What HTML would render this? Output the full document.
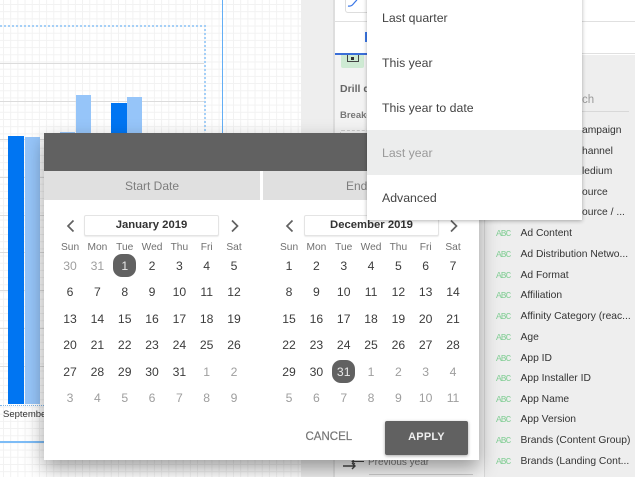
<!DOCTYPE html>
<html><head><meta charset="utf-8">
<style>
html,body{margin:0;padding:0;width:635px;height:477px;overflow:hidden;background:#fff;font-family:"Liberation Sans",sans-serif}
#r{position:relative;width:635px;height:477px;overflow:hidden;filter:blur(.25px)}
.a{position:absolute}
.t{position:absolute;white-space:nowrap}
.cal{position:absolute;top:234.75px;width:191.4px;display:grid;grid-template-columns:repeat(7,27.34px);grid-template-rows:18px;grid-auto-rows:26.5px;text-align:center;font-size:12.2px;line-height:26.5px;color:#3c3c3c}
.cal b{font-weight:normal;font-size:10.2px;color:#707070;height:18px;line-height:26px}
.cal i{font-style:normal;position:relative;z-index:1}
.cal i.o{color:#9e9e9e}
.cal i.s{color:#e8e8e8}
.cal i.s:before{content:"";position:absolute;left:2px;top:1px;width:23px;height:23px;border-radius:9px;background:#616161;z-index:-1}
.box{position:absolute;top:215px;height:19px;background:#fff;border:1px solid #e4e4e4;border-radius:2px;box-shadow:0 1px 1px rgba(0,0,0,.08);text-align:center;font-size:11.3px;font-weight:bold;line-height:19px;color:#333}
.li{position:absolute;left:367px;width:215px;height:45px;line-height:46px;font-size:12.3px;color:#444;text-indent:15px}
.f{position:absolute;left:520.5px;font-size:10.3px;color:#333;white-space:nowrap;line-height:14px}
.g{position:absolute;left:496px;font-size:9.5px;color:#86cf98;font-family:"Liberation Mono",monospace;line-height:14px;letter-spacing:-.9px}
</style></head><body><div id="r">

<!-- canvas grid -->
<div class="a" style="left:0;top:0;width:301px;height:477px;background-color:#fff;background-image:linear-gradient(#f2f2f2 1px,transparent 1px),linear-gradient(90deg,#f2f2f2 1px,transparent 1px);background-size:7.2px 7.2px;background-position:3px 4px"></div>
<div class="a" style="left:301px;top:0;width:32px;height:477px;background:#eeeeee"></div>
<div class="a" style="left:333px;top:0;width:3px;height:477px;background:#dedede"></div>

<!-- chart -->
<div class="a" style="left:222px;top:0;width:1px;height:135px;background:#63aef5"></div>
<div class="a" style="left:0;top:25px;width:206px;height:0;border-top:2px dotted #a6d0f7"></div>
<div class="a" style="left:204px;top:25px;width:0;height:110px;border-left:2px dotted #a6d0f7"></div>
<div class="a" style="left:0;top:63px;width:204px;height:1px;background:#dcdcdc"></div>
<div class="a" style="left:0;top:101px;width:204px;height:1px;background:#dcdcdc"></div>
<div class="a" style="left:0;top:139px;width:44px;height:1px;background:#dcdcdc"></div>
<div class="a" style="left:0;top:177px;width:44px;height:1px;background:#dcdcdc"></div>
<div class="a" style="left:0;top:215px;width:44px;height:1px;background:#dcdcdc"></div>
<div class="a" style="left:0;top:252px;width:44px;height:1px;background:#dcdcdc"></div>
<div class="a" style="left:0;top:290px;width:44px;height:1px;background:#dcdcdc"></div>
<div class="a" style="left:0;top:328px;width:44px;height:1px;background:#dcdcdc"></div>
<div class="a" style="left:0;top:366px;width:44px;height:1px;background:#dcdcdc"></div>
<div class="a" style="left:8px;top:136px;width:16px;height:268px;background:#0075f2"></div>
<div class="a" style="left:25px;top:137px;width:15px;height:267px;background:#96c5f9"></div>
<div class="a" style="left:60px;top:132px;width:15px;height:3px;background:#96c5f9"></div>
<div class="a" style="left:76px;top:95px;width:15px;height:40px;background:#96c5f9"></div>
<div class="a" style="left:111px;top:103px;width:16px;height:32px;background:#0075f2"></div>
<div class="a" style="left:127px;top:97px;width:15px;height:38px;background:#96c5f9"></div>
<div class="a" style="left:0;top:405px;width:44px;height:0;border-top:1.5px dotted #7fb6ea"></div>
<div class="t" style="left:3px;top:409px;font-size:9.5px;line-height:12px;color:#333;width:41px;overflow:hidden">September</div>
<div class="a" style="left:0;top:441px;width:44px;height:1.5px;background:#7dbcf6"></div>

<!-- side panel -->
<div class="a" style="left:335px;top:0;width:150px;height:477px;background:#f3f3f3"></div>
<div class="a" style="left:335px;top:0;width:300px;height:21px;background:#fff;border-bottom:1px solid #e0e0e0"></div>
<div class="a" style="left:345px;top:-6px;width:30px;height:17px;background:#fff;border:1px solid #ddd;border-radius:3px"></div>
<svg class="a" style="left:345px;top:0" width="22" height="10"><path d="M3 6 C8 7 9 2 12 0" fill="none" stroke="#3b78e7" stroke-width="1.2"/></svg>
<div class="a" style="left:335px;top:22px;width:300px;height:31px;background:#fff;border-bottom:1px solid #e0e0e0"></div>
<div class="a" style="left:335px;top:53px;width:32px;height:2px;background:#3b6fd8"></div>
<div class="a" style="left:365px;top:32px;width:2px;height:10px;background:#3b78e7"></div>
<div class="a" style="left:341px;top:55px;width:23px;height:13px;background:#ceead3;border-radius:0 0 2px 2px"></div>
<div class="a" style="left:347px;top:55px;width:10px;height:6px;border:1px solid #444;border-top:0"></div>
<div class="a" style="left:351px;top:57px;width:3px;height:3px;background:#333"></div>
<div class="t" style="left:340px;top:83px;font-size:10.5px;font-weight:bold;color:#666;line-height:13px">Drill d</div>
<div class="t" style="left:340px;top:109px;font-size:9.5px;font-weight:bold;color:#777;line-height:13px">Breako</div>
<div class="a" style="left:340px;top:130px;width:27px;height:6px;border:1px dashed #ccc;border-radius:2px"></div>
<svg class="a" style="left:342px;top:455px" width="24" height="16"><path d="M1 11H13M10 8l3 3-3 3" fill="none" stroke="#444" stroke-width="1.4"/><path d="M10 6.500H22M13 4l-3 2.500 3 2.500" fill="none" stroke="#444" stroke-width="1"/></svg>
<div class="t" style="left:368px;top:456px;font-size:10px;line-height:13px;color:#777">Previous year</div>
<div class="a" style="left:369px;top:474px;width:104px;height:1px;background:#ccc"></div>

<!-- field list -->
<div class="a" style="left:484px;top:55px;width:151px;height:422px;background:#eeeeee;border-left:1px solid #dadada"></div>
<div class="t" style="left:582px;top:93px;font-size:11.5px;color:#9a9a9a;line-height:14px">ch</div>
<div class="a" style="left:490px;top:111px;width:139px;height:1px;background:#d8d8d8"></div>
<div class="f" style="left:582px;top:124px">ampaign</div>
<div class="f" style="left:582px;top:145px">hannel</div>
<div class="f" style="left:582px;top:165px">ledium</div>
<div class="f" style="left:582px;top:186px">ource</div>
<div class="f" style="left:582px;top:206px">ource / ...</div>
<div class="g" style="top:227px">ABC</div><div class="f" style="top:227px">Ad Content</div>
<div class="g" style="top:248px">ABC</div><div class="f" style="top:248px">Ad Distribution Netwo...</div>
<div class="g" style="top:269px">ABC</div><div class="f" style="top:269px">Ad Format</div>
<div class="g" style="top:289px">ABC</div><div class="f" style="top:289px">Affiliation</div>
<div class="g" style="top:310px">ABC</div><div class="f" style="top:310px">Affinity Category (reac...</div>
<div class="g" style="top:331px">ABC</div><div class="f" style="top:331px">Age</div>
<div class="g" style="top:352px">ABC</div><div class="f" style="top:352px">App ID</div>
<div class="g" style="top:372px">ABC</div><div class="f" style="top:372px">App Installer ID</div>
<div class="g" style="top:393px">ABC</div><div class="f" style="top:393px">App Name</div>
<div class="g" style="top:413px">ABC</div><div class="f" style="top:413px">App Version</div>
<div class="g" style="top:434px">ABC</div><div class="f" style="top:434px">Brands (Content Group)</div>
<div class="g" style="top:455px">ABC</div><div class="f" style="top:455px">Brands (Landing Cont...</div>

<!-- dialog -->
<div class="a" style="left:44px;top:133px;width:435px;height:327px;background:#fff;box-shadow:0 8px 18px rgba(0,0,0,.38)"></div>
<div class="a" style="left:44px;top:133px;width:435px;height:38px;background:#616161"></div>
<div class="a" style="left:44px;top:171px;width:216px;height:29px;background:#e0e0e0;color:#7d7d7d;font-size:12px;line-height:30px;text-align:center">Start Date</div>
<div class="a" style="left:263px;top:171px;width:216px;height:29px;background:#e0e0e0;color:#7d7d7d;font-size:12px;line-height:30px;text-align:center">End Date</div>

<svg class="a" style="left:66px;top:219px" width="10" height="14"><path d="M7.5 1.5 2 7l5.5 5.5" fill="none" stroke="#616161" stroke-width="1.7"/></svg>
<svg class="a" style="left:230px;top:219px" width="10" height="14"><path d="M2 1.5 7.5 7 2 12.5" fill="none" stroke="#616161" stroke-width="1.7"/></svg>
<svg class="a" style="left:285px;top:219px" width="10" height="14"><path d="M7.5 1.5 2 7l5.5 5.5" fill="none" stroke="#616161" stroke-width="1.7"/></svg>
<svg class="a" style="left:449px;top:219px" width="10" height="14"><path d="M2 1.5 7.5 7 2 12.5" fill="none" stroke="#616161" stroke-width="1.7"/></svg>
<div class="box" style="left:84px;width:133px">January 2019</div>
<div class="box" style="left:304px;width:133px">December 2019</div>

<div class="cal" style="left:56.4px">
<b>Sun</b><b>Mon</b><b>Tue</b><b>Wed</b><b>Thu</b><b>Fri</b><b>Sat</b>
<i class="o">30</i><i class="o">31</i><i class="s">1</i><i>2</i><i>3</i><i>4</i><i>5</i>
<i>6</i><i>7</i><i>8</i><i>9</i><i>10</i><i>11</i><i>12</i>
<i>13</i><i>14</i><i>15</i><i>16</i><i>17</i><i>18</i><i>19</i>
<i>20</i><i>21</i><i>22</i><i>23</i><i>24</i><i>25</i><i>26</i>
<i>27</i><i>28</i><i>29</i><i>30</i><i>31</i><i class="o">1</i><i class="o">2</i>
<i class="o">3</i><i class="o">4</i><i class="o">5</i><i class="o">6</i><i class="o">7</i><i class="o">8</i><i class="o">9</i>
</div>
<div class="cal" style="left:275.4px">
<b>Sun</b><b>Mon</b><b>Tue</b><b>Wed</b><b>Thu</b><b>Fri</b><b>Sat</b>
<i>1</i><i>2</i><i>3</i><i>4</i><i>5</i><i>6</i><i>7</i>
<i>8</i><i>9</i><i>10</i><i>11</i><i>12</i><i>13</i><i>14</i>
<i>15</i><i>16</i><i>17</i><i>18</i><i>19</i><i>20</i><i>21</i>
<i>22</i><i>23</i><i>24</i><i>25</i><i>26</i><i>27</i><i>28</i>
<i>29</i><i>30</i><i class="s">31</i><i class="o">1</i><i class="o">2</i><i class="o">3</i><i class="o">4</i>
<i class="o">5</i><i class="o">6</i><i class="o">7</i><i class="o">8</i><i class="o">9</i><i class="o">10</i><i class="o">11</i>
</div>

<div class="t" style="left:305.500px;top:430px;font-size:11.500px;line-height:14px;color:#757575;-webkit-text-stroke:.2px #757575">CANCEL</div>
<div class="a" style="left:385px;top:421px;width:83px;height:34px;background:#616161;border-radius:2px;box-shadow:0 1px 3px rgba(0,0,0,.35);color:#eee;font-size:11px;font-weight:bold;line-height:33px;text-align:center;letter-spacing:.2px">APPLY</div>

<!-- dropdown -->
<div class="a" style="left:367px;top:-5px;width:215px;height:225px;background:#fff;box-shadow:0 1px 4px rgba(0,0,0,.3)"></div>
<div class="li" style="top:-5px">Last quarter</div>
<div class="li" style="top:40px">This year</div>
<div class="li" style="top:85px">This year to date</div>
<div class="li" style="top:130px;background:#eceded;color:#9a9a9a">Last year</div>
<div class="li" style="top:175px">Advanced</div>

</div></body></html>
